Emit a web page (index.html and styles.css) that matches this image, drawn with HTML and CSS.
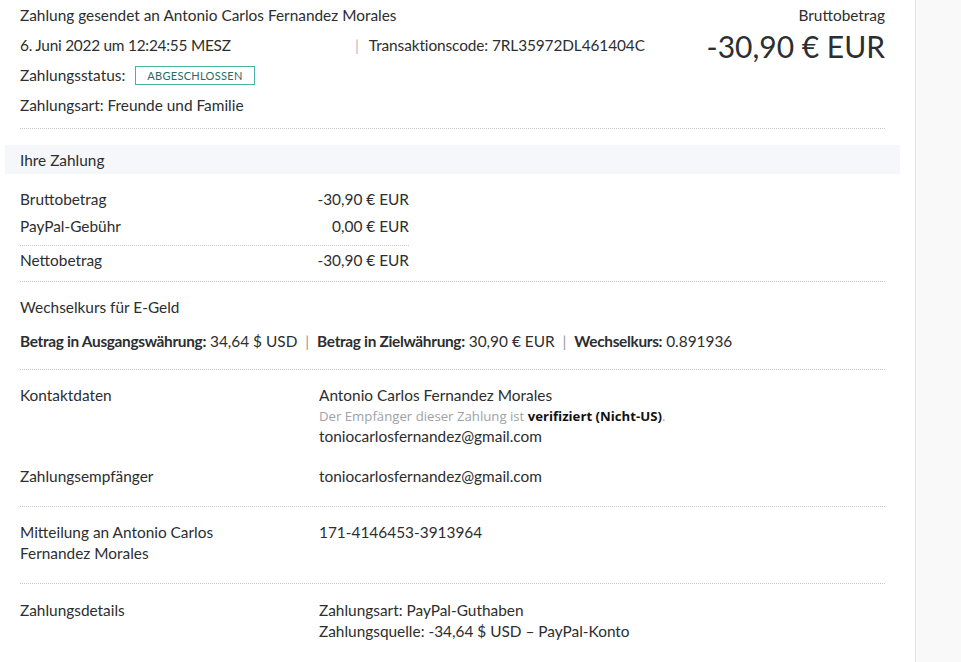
FILE: index.html
```html
<!DOCTYPE html>
<html lang="de">
<head>
<meta charset="utf-8">
<title>Transaktionsdetails</title>
<link rel="stylesheet" href="styles.css">
</head>
<body>
<div class="page">
  <main class="panel">
    <header class="head">
      <div class="head-left">
        <div class="line">Zahlung gesendet an Antonio Carlos Fernandez Morales</div>
        <div class="line meta">
          <span class="date">6. Juni 2022 um 12:24:55 MESZ</span>
          <span class="sep">|</span>
          <span class="code">Transaktionscode: 7RL35972DL461404C</span>
        </div>
        <div class="line">Zahlungsstatus: <span class="badge">ABGESCHLOSSEN</span></div>
        <div class="line">Zahlungsart: Freunde und Familie</div>
      </div>
      <div class="head-right">
        <div class="gross-label">Bruttobetrag</div>
        <div class="gross-amount">-30,90 € EUR</div>
      </div>
    </header>

    <div class="bar">Ihre Zahlung</div>

    <section class="sum">
      <div class="sum-top">
        <div class="sum-row"><span>Bruttobetrag</span><span>-30,90 € EUR</span></div>
        <div class="sum-row"><span>PayPal-Gebühr</span><span>0,00 € EUR</span></div>
      </div>
      <div class="sum-row net"><span>Nettobetrag</span><span>-30,90 € EUR</span></div>
    </section>

    <section class="rate">
      <div class="rate-title">Wechselkurs für E-Geld</div>
      <div class="rate-line"><b>Betrag in Ausgangswährung:</b> 34,64 $ USD <span class="pipe">|</span> <b>Betrag in Zielwährung:</b> 30,90 € EUR <span class="pipe">|</span> <b>Wechselkurs:</b> 0.891936</div>
    </section>

    <section class="details">
      <div class="detail-row">
        <div class="dl">Kontaktdaten</div>
        <div class="dv">
          <div>Antonio Carlos Fernandez Morales</div>
          <div class="verify">Der Empfänger dieser Zahlung ist <b>verifiziert (Nicht-US)</b>.</div>
          <div>toniocarlosfernandez@gmail.com</div>
        </div>
      </div>
      <div class="detail-row second">
        <div class="dl">Zahlungsempfänger</div>
        <div class="dv">toniocarlosfernandez@gmail.com</div>
      </div>
    </section>

    <section class="details">
      <div class="detail-row">
        <div class="dl">Mitteilung an Antonio Carlos<br>Fernandez Morales</div>
        <div class="dv">171-4146453-3913964</div>
      </div>
    </section>

    <section class="details last">
      <div class="detail-row">
        <div class="dl">Zahlungsdetails</div>
        <div class="dv">
          <div>Zahlungsart: PayPal-Guthaben</div>
          <div>Zahlungsquelle: -34,64 $ USD – PayPal-Konto</div>
        </div>
      </div>
    </section>
  </main>
  <aside class="side"></aside>
</div>
</body>
</html>
```

FILE: styles.css
```css
html, body {
  margin: 0;
  padding: 0;
  height: 100%;
  background: #f9f9f9;
}
body {
  font-family: Lato, "Open Sans", sans-serif;
  font-size: 15.4px;
  color: #2c2e2f;
}
.page {
  display: flex;
  min-height: 100%;
}
.panel {
  width: 916px;
  box-sizing: border-box;
  background: #fff;
  border-right: 1px solid #e3e3e3;
  padding: 0 30px 0 20px;
  overflow: hidden;
}
.side {
  flex: 1;
}
.head {
  display: flex;
  justify-content: space-between;
  padding-bottom: 7px;
  border-bottom: 1px dotted #c8c8c8;
}
.line {
  height: 30px;
  line-height: 30px;
  display: flex;
  align-items: center;
}
.line:last-child {
  height: 31px;
  line-height: 31px;
}
.meta .date {
  width: 335px;
  letter-spacing: -0.25px;
}
.meta .sep {
  color: #b8b8b8;
  margin-right: 10px;
}
.meta .code {
  letter-spacing: -0.1px;
}
.badge {
  display: inline-block;
  margin-left: 10px;
  border: 1px solid #4bb1a2;
  color: #1e6e64;
  font-size: 11px;
  line-height: 17px;
  padding: 0 11px;
  letter-spacing: 0.3px;
}
.head-right {
  text-align: right;
}
.gross-label {
  line-height: 30px;
  height: 29px;
}
.gross-amount {
  font-size: 30px;
  line-height: 34px;
}
.bar {
  margin: 16px -15px 0 -15px;
  padding: 0 15px;
  height: 29px;
  line-height: 30px;
  background: #f5f7fa;
}
.sum {
  padding-top: 12px;
  padding-bottom: 7px;
  border-bottom: 1px dotted #c8c8c8;
}
.sum-top {
  width: 389px;
  padding-bottom: 5px;
  border-bottom: 1px dotted #c8c8c8;
}
.sum-row {
  width: 389px;
  display: flex;
  justify-content: space-between;
  height: 27px;
  line-height: 27px;
}
.sum-row.net {
  margin-top: 1px;
}
.rate {
  padding: 15px 0 18px;
  border-bottom: 1px dotted #c8c8c8;
}
.rate-title {
  line-height: 20px;
}
.rate-line {
  margin-top: 14px;
  line-height: 20px;
}
.rate-line b {
  font-weight: 700;
  letter-spacing: -0.32px;
}
.pipe {
  color: #9a9a9a;
  margin: 0 4px;
}
.details {
  padding: 15px 0 19px;
  border-bottom: 1px dotted #c8c8c8;
}
.details.last {
  border-bottom: none;
  padding-top: 16px;
}
.detail-row {
  display: flex;
  line-height: 21px;
}
.detail-row.second {
  margin-top: 19px;
}
.dl {
  width: 299px;
  flex: none;
}
.dv {
  flex: 1;
}
.verify {
  font-family: "Open Sans", sans-serif;
  font-size: 13.2px;
  color: #9da3a6;
  line-height: 20px;
}
.verify b {
  color: #111;
  font-weight: 700;
}
```
